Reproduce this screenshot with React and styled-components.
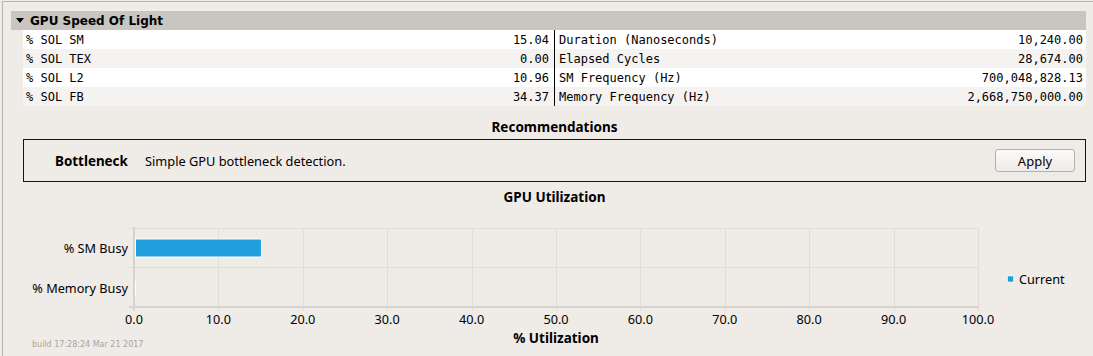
import React from 'react';
import styled, { createGlobalStyle } from 'styled-components';

const GlobalStyle = createGlobalStyle`
  html, body {
    margin: 0;
    padding: 0;
    overflow: hidden;
    background: #efebe7;
  }
  body {
    font-family: "Noto Sans", "DejaVu Sans", sans-serif;
    font-size: 12.8px;
    color: #000;
  }
`;

const Window = styled.div`
  position: relative;
  height: 100vh;
  padding-top: 1px;
  box-sizing: border-box;
`;

const Frame = styled.div`
  margin-left: 2px;
  height: 100%;
  box-sizing: border-box;
  border-top: 1px solid #b9b5b1;
  border-left: 1px solid #b9b5b1;
  padding: 9px 7px 0 8px;
`;

const SectionHeader = styled.div`
  height: 19px;
  display: flex;
  align-items: center;
  background: #c9c5c1;
  font-family: "DejaVu Sans", sans-serif;
  font-weight: bold;
  font-size: 12px;
`;

const Caret = styled.span`
  width: 0;
  height: 0;
  margin: 0 6px 0 5px;
  border-left: 4px solid transparent;
  border-right: 4px solid transparent;
  border-top: 5px solid #000;
`;

const Body = styled.div`
  margin-left: 12px;
`;

const Table = styled.div`
  display: flex;
  flex-direction: column;
`;

const Row = styled.div`
  display: grid;
  grid-template-columns: 532px 1fr;
  height: 19px;
  background: ${(p) => (p.$alt ? '#f5f3f1' : '#ffffff')};
`;

const Cell = styled.div`
  display: flex;
  align-items: center;
  justify-content: space-between;
  font-family: "DejaVu Sans Mono", monospace;
  font-size: 12px;
  white-space: pre;
  padding: ${(p) => (p.$first ? '0 5px 0 3px' : '0 3px 0 4px')};
  border-right: ${(p) => (p.$first ? '1px solid #000' : 'none')};
`;

const Title = styled.div`
  margin-top: ${(p) => p.$gap}px;
  line-height: 18px;
  text-align: center;
  font-weight: bold;
  font-size: 13.5px;
`;

const RecBox = styled.div`
  margin-top: 3px;
  height: 43px;
  box-sizing: border-box;
  border: 1px solid #141414;
  display: flex;
  align-items: center;
  padding-left: 31px;
`;

const RecName = styled.span`
  width: 90px;
  font-weight: bold;
  font-size: 13.4px;
`;

const RecText = styled.span`
  flex: 1;
`;

const Button = styled.button`
  width: 80px;
  height: 23px;
  margin-right: 10px;
  border: 1px solid #b3afab;
  border-radius: 3px;
  background: linear-gradient(#fcfbfa, #eeebe8);
  font-family: "Noto Sans", sans-serif;
  font-size: 13px;
  color: #000;
  padding: 0;
`;

const ChartSvg = styled.svg`
  display: block;
  font-family: "Noto Sans", "DejaVu Sans", sans-serif;
  font-size: 12.7px;
`;

const BuildTag = styled.div`
  position: absolute;
  left: 32px;
  bottom: 6px;
  line-height: 10px;
  font-family: "DejaVu Sans", sans-serif;
  font-size: 8px;
  color: #a9a5a1;
`;

const rows = [
  ['% SOL SM', '15.04', 'Duration (Nanoseconds)', '10,240.00'],
  ['% SOL TEX', '0.00', 'Elapsed Cycles', '28,674.00'],
  ['% SOL L2', '10.96', 'SM Frequency (Hz)', '700,048,828.13'],
  ['% SOL FB', '34.37', 'Memory Frequency (Hz)', '2,668,750,000.00'],
];

const bars = [
  { label: '% SM Busy', value: 15.04, y: 248 },
  { label: '% Memory Busy', value: 0, y: 288 },
];

const X0 = 134;
const X1 = 978;
const TOP = 228;
const MID = 267;
const BOT = 307;
const BLUE = '#209fdf';
const xAt = (v) => X0 + ((X1 - X0) * v) / 100;

function UtilizationChart() {
  const ticks = Array.from({ length: 11 }, (_, i) => i * 10);
  return (
    <ChartSvg width="1063" height="150" viewBox="23 206 1063 150">
      {ticks.slice(1).map((t) => {
        const x = Math.round(xAt(t)) + 0.5;
        return <line key={t} x1={x} x2={x} y1={TOP} y2={BOT + 4} stroke="#e1ddd9" />;
      })}
      {[TOP, MID].map((y) => (
        <line key={y} x1={X0 - 5} x2={X1 + 0.5} y1={y + 0.5} y2={y + 0.5} stroke="#e1ddd9" />
      ))}
      <line x1={X0 - 5} x2={X1 + 1} y1={BOT} y2={BOT} stroke="#d6d2ce" strokeWidth="2" />
      <line x1={X0} x2={X0} y1={TOP - 1} y2={BOT + 4} stroke="#d6d2ce" strokeWidth="2" />

      {bars.map((b) =>
        b.value > 0 ? (
          <rect
            key={b.label}
            x={X0 + 1.5}
            y={b.y - 9}
            width={xAt(b.value) - X0 - 1}
            height="18"
            fill={BLUE}
            stroke="#ffffff"
            strokeWidth="1"
          />
        ) : (
          <line key={b.label} x1={X0 + 1.5} x2={X0 + 1.5} y1={b.y - 7} y2={b.y + 9} stroke="#ffffff" />
        )
      )}

      {bars.map((b) => (
        <text key={b.label} x="128" y={b.y} textAnchor="end" dominantBaseline="central">
          {b.label}
        </text>
      ))}

      {ticks.map((t) => (
        <text key={t} x={xAt(t)} y="319" textAnchor="middle" dominantBaseline="central">
          {t.toFixed(1)}
        </text>
      ))}

      <text
        x={(X0 + X1) / 2}
        y="338"
        textAnchor="middle"
        dominantBaseline="central"
        fontWeight="bold"
        fontSize="13.5"
      >
        % Utilization
      </text>

      <rect x="1007.5" y="276" width="6" height="6" fill={BLUE} stroke="#ffffff" strokeWidth="0.6" />
      <text x="1019" y="279" dominantBaseline="central">
        Current
      </text>
    </ChartSvg>
  );
}

export default function App() {
  return (
    <>
      <GlobalStyle />
      <Window>
        <Frame>
          <SectionHeader>
            <Caret />
            GPU Speed Of Light
          </SectionHeader>
          <Body>
            <Table>
              {rows.map(([l1, v1, l2, v2], i) => (
                <Row key={l1} $alt={i % 2 === 1}>
                  <Cell $first>
                    <span>{l1}</span>
                    <span>{v1}</span>
                  </Cell>
                  <Cell>
                    <span>{l2}</span>
                    <span>{v2}</span>
                  </Cell>
                </Row>
              ))}
            </Table>

            <Title $gap={12}>Recommendations</Title>
            <RecBox>
              <RecName>Bottleneck</RecName>
              <RecText>Simple GPU bottleneck detection.</RecText>
              <Button>Apply</Button>
            </RecBox>

            <Title $gap={6}>GPU Utilization</Title>
            <UtilizationChart />
          </Body>
        </Frame>
        <BuildTag>build 17:28:24 Mar 21 2017</BuildTag>
      </Window>
    </>
  );
}
